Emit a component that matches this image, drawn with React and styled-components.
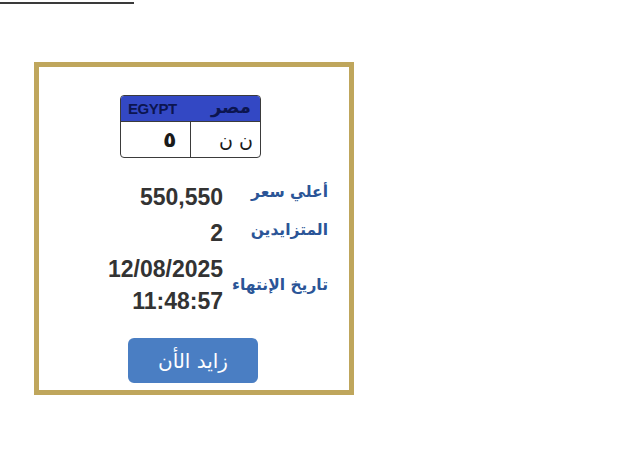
import React from "react";
import styled, { createGlobalStyle } from "styled-components";

const Global = createGlobalStyle`
  html, body { margin: 0; padding: 0; background: #ffffff; }
  body { font-family: "Liberation Sans", Arial, sans-serif; }
`;

const Page = styled.div`
  width: 640px;
  height: 460px;
  display: flex;
  flex-direction: column;
  align-items: flex-start;
`;

const Rule = styled.div`
  width: 134px;
  height: 2px;
  margin-top: 2px;
  background: #3a3a3a;
`;

const Card = styled.div`
  margin-top: 58px;
  margin-left: 34px;
  width: 320px;
  height: 333px;
  box-sizing: border-box;
  border: 5px solid #bfa65c;
  background: #fff;
  display: flex;
  flex-direction: column;
  align-items: flex-start;
  padding-top: 28px;
`;

const Plate = styled.div`
  margin-left: 81px;
  width: 141px;
  box-sizing: border-box;
  border: 1.5px solid #3b3b3b;
  border-radius: 4px;
  overflow: hidden;
  display: flex;
  flex-direction: column;
`;

const PlateHead = styled.div`
  height: 25px;
  background: #3348c4;
  display: flex;
  align-items: center;
  justify-content: space-between;
  padding: 0 9px 0 7px;
  border-bottom: 1.5px solid #3b3b3b;
  color: #0c1550;
`;

const Egypt = styled.span`
  font-family: "Liberation Sans", Arial, sans-serif;
  font-weight: 700;
  font-size: 15px;
  letter-spacing: -0.4px;
`;

const Misr = styled.span`
  font-family: "DejaVu Sans", sans-serif;
  font-weight: 700;
  font-size: 18px;
  line-height: 1;
  margin-top: -4px;
`;

const PlateBody = styled.div`
  height: 35px;
  display: grid;
  grid-template-columns: 1fr 1fr;
`;

const PlateCell = styled.div`
  direction: rtl;
  display: flex;
  align-items: center;
  padding-right: ${(p) => p.$pr}px;
  border-right: ${(p) => (p.$divider ? "1.5px solid #3b3b3b" : "none")};
  font-family: "DejaVu Sans", sans-serif;
  font-weight: ${(p) => p.$weight};
  font-size: ${(p) => p.$size}px;
  color: #1a1a1a;
`;

const Info = styled.div`
  direction: rtl;
  margin-top: 23px;
  align-self: flex-end;
  margin-right: 21px;
  display: grid;
  grid-template-columns: auto auto;
  column-gap: 9px;
  row-gap: 4px;
  align-items: center;
`;

const Label = styled.div`
  font-family: "DejaVu Sans", sans-serif;
  font-weight: 700;
  font-size: 15.5px;
  color: #2b5597;
  margin-top: ${(p) => p.$lift || 0}px;
`;

const Value = styled.div`
  font-family: "Liberation Sans", Arial, sans-serif;
  font-weight: 700;
  font-size: 23px;
  line-height: 32px;
  color: #333333;
  direction: ltr;
  text-align: right;
`;

const Button = styled.button`
  margin-top: 21px;
  margin-left: 89px;
  width: 130px;
  height: 45px;
  border: none;
  border-radius: 6px;
  background: #4a7ec3;
  color: #ffffff;
  font-family: "DejaVu Sans", sans-serif;
  font-size: 20px;
  letter-spacing: 0.5px;
  direction: rtl;
  cursor: pointer;
`;

export default function App() {
  return (
    <Page>
      <Global />
      <Rule />
      <Card>
        <Plate>
          <PlateHead>
            <Egypt>EGYPT</Egypt>
            <Misr>مصر</Misr>
          </PlateHead>
          <PlateBody>
            <PlateCell $divider $pr={13} $size={22} $weight={700}>٥</PlateCell>
            <PlateCell $pr={7} $size={19} $weight={400}>ن ن</PlateCell>
          </PlateBody>
        </Plate>
        <Info>
          <Label $lift={-10}>أعلي سعر</Label>
          <Value>550,550</Value>
          <Label $lift={-6}>المتزايدين</Label>
          <Value>2</Value>
          <Label>تاريخ الإنتهاء</Label>
          <Value>
            12/08/2025
            <br />
            11:48:57
          </Value>
        </Info>
        <Button>زايد الأن</Button>
      </Card>
    </Page>
  );
}
